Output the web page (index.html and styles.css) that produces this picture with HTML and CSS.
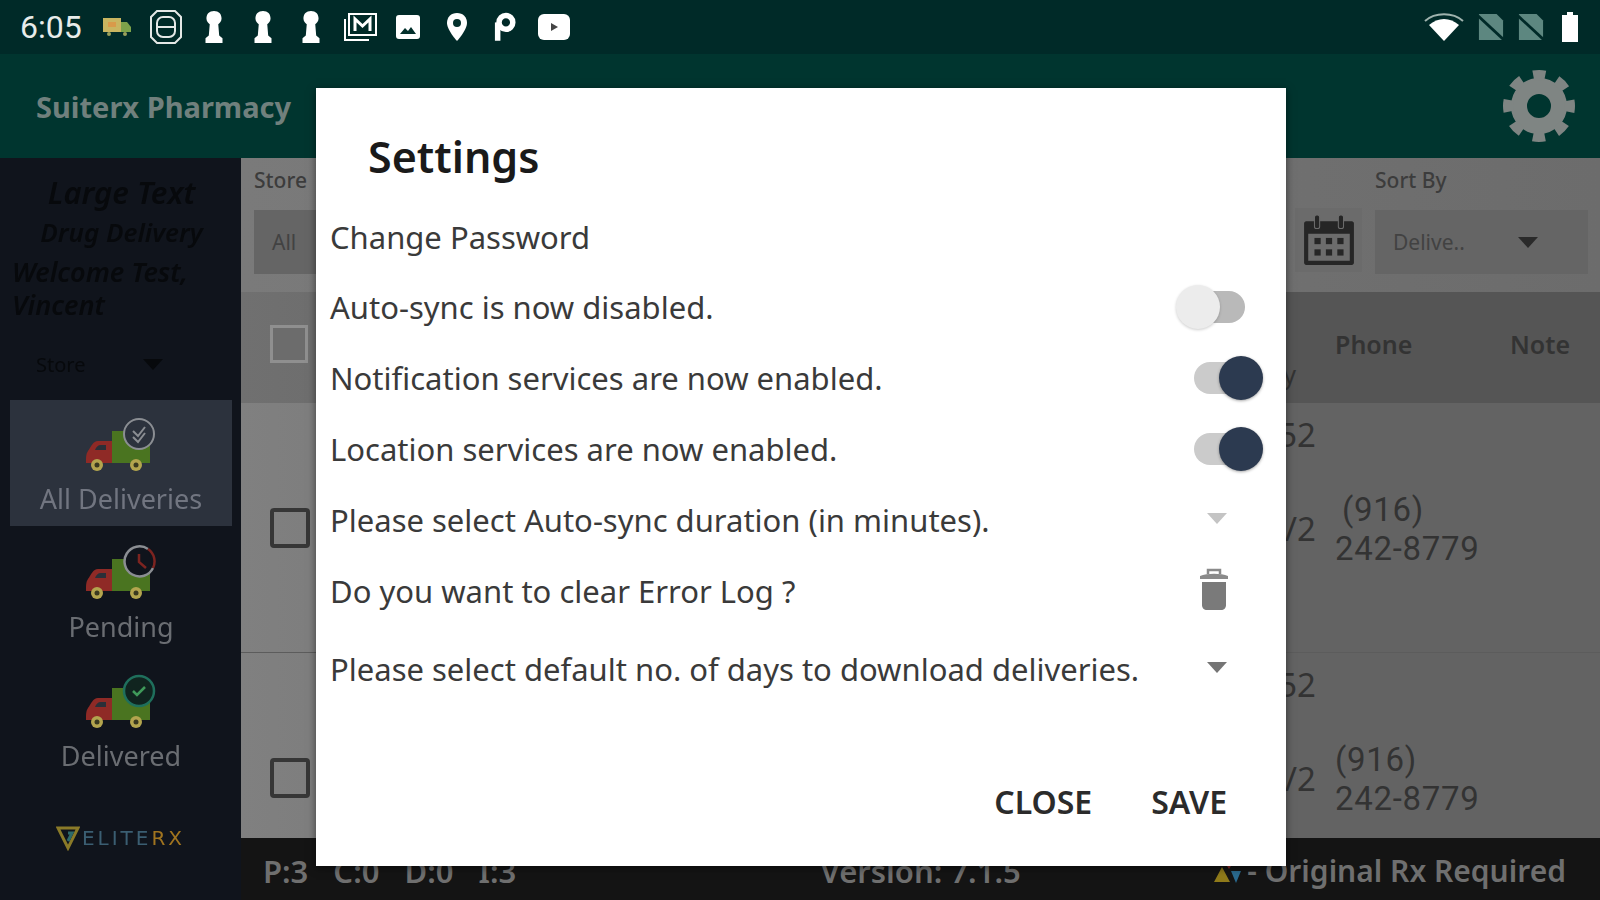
FILE: index.html
```html
<!DOCTYPE html>
<html lang="en">
<head>
  <meta charset="UTF-8">
  <title>Suiterx Pharmacy</title>
  <link rel="stylesheet" href="styles.css">
</head>
<body>

<svg class="defs" width="0" height="0">
  <symbol id="truck" viewBox="0 0 72 56">
    <path d="M28 24 H14 C9 24 7 30 4 34 C2 37 2 40 2 46 H28 Z" fill="#8f2a26"/>
    <path d="M11 33 C12 30 14 28 17 28 H22 V33 Z" fill="#2b2f38"/>
    <path d="M28 14 H66 V46 H28 Z" fill="#4a7420"/>
    <circle cx="13" cy="48" r="6" fill="#b3a54e"/>
    <circle cx="13" cy="48" r="2.5" fill="#3a3a20"/>
    <circle cx="52" cy="48" r="6" fill="#b3a54e"/>
    <circle cx="52" cy="48" r="2.5" fill="#3a3a20"/>
  </symbol>
  <symbol id="pawn" viewBox="0 0 24 36">
    <path d="M12 1 C7 1 4 4 4 9 C4 12 6 14 7.5 15 L6.5 27 L3 30 V35 H21 V30 L17.5 27 L16.5 15 C18 14 20 12 20 9 C20 4 17 1 12 1 Z" fill="#fff"/>
  </symbol>
  <symbol id="sim" viewBox="0 0 28 30">
    <path d="M1 1 H20 L27 8 V29 H1 Z" fill="#5d8780"/>
    <path d="M0 3 L28 29" stroke="#002a28" stroke-width="3"/>
  </symbol>
</svg>

<div class="statusbar">
  <span class="clock">6:05</span>
  <div class="status-icons">
    <svg width="30" height="22" viewBox="0 0 30 22">
      <rect x="1" y="2" width="18" height="14" fill="#c9b560"/>
      <rect x="6" y="6" width="8" height="5" fill="#d99a4a"/>
      <path d="M19 6 H25 L29 11 V16 H19 Z" fill="#7da24a"/>
      <circle cx="7" cy="18" r="2" fill="#9aa05a"/>
      <circle cx="23" cy="18" r="2" fill="#9aa05a"/>
    </svg>
    <svg width="34" height="36" viewBox="0 0 34 36" fill="none" stroke="#e4e8e6" stroke-width="2">
      <path d="M8 2 H26 L32 8 V28 L26 34 H8 L2 28 V8 Z"/>
      <rect x="8" y="8" width="18" height="20" rx="6"/>
      <path d="M8 18 H26"/>
    </svg>
    <svg width="24" height="34"><use href="#pawn"/></svg>
    <svg width="24" height="34"><use href="#pawn"/></svg>
    <svg width="24" height="34"><use href="#pawn"/></svg>
    <svg width="34" height="30" viewBox="0 0 34 30" fill="none" stroke="#fff">
      <path d="M2 7 V28 H26" stroke-width="2"/>
      <rect x="6" y="2" width="27" height="21" stroke-width="2"/>
      <path d="M12 19 V7 L19.500 14 L27 7 V19" stroke-width="3"/>
    </svg>
    <svg width="24" height="26" viewBox="0 0 24 26">
      <rect x="0" y="1" width="24" height="24" rx="3" fill="#fff"/>
      <path d="M4 20 L9 14 L12 17 L15 13 L20 20 Z" fill="#03302c"/>
    </svg>
    <svg width="22" height="30" viewBox="0 0 22 30">
      <path d="M11 1 C5 1 1 5 1 11 C1 18 11 29 11 29 C11 29 21 18 21 11 C21 5 17 1 11 1 Z" fill="#fff"/>
      <circle cx="11" cy="11" r="4" fill="#03302c"/>
    </svg>
    <svg width="22" height="30" viewBox="0 0 24 32" fill="none" stroke="#fff" stroke-width="6">
      <path d="M4 31 V11"/>
      <circle cx="13" cy="11" r="7.500"/>
    </svg>
    <svg width="32" height="26" viewBox="0 0 32 26">
      <rect x="0" y="0" width="32" height="26" rx="6" fill="#fff"/>
      <path d="M13 9 L20 13 L13 17 Z" fill="#444"/>
    </svg>
  </div>

  <div class="status-right">
    <svg width="40" height="30" viewBox="0 0 40 30">
      <path d="M1 9 C11 0 29 0 39 9" fill="none" stroke="#9fb3ae" stroke-width="2"/>
      <path d="M5 13 C14 5 26 5 35 13 L20 29 Z" fill="#fff"/>
    </svg>
    <svg width="26" height="28"><use href="#sim"/></svg>
    <svg width="26" height="28"><use href="#sim"/></svg>
    <svg class="battery" width="20" height="32" viewBox="0 0 20 32">
      <path d="M7 1 H13 V4 H18 V31 H2 V4 H7 Z" fill="#fff"/>
    </svg>
  </div>
</div>

<div class="appbar">
  <span class="app-title">Suiterx Pharmacy</span>
  <svg class="gear" width="72" height="72" viewBox="0 0 72 72" fill="none" stroke="#7f8583">
    <circle cx="36" cy="36" r="20" stroke-width="16"/>
    <circle cx="36" cy="36" r="31" stroke-width="10" stroke-dasharray="12 12.350" stroke-dashoffset="6"/>
  </svg>
</div>

<div class="main">
  <aside class="sidebar">
    <div class="welcome">
      <div class="brand-big">Large Text</div>
      <div class="brand-small">Drug Delivery</div>
      <div class="user">Welcome Test, Vincent</div>
    </div>
    <div class="store-pick">
      <span>Store</span>
      <i class="arrow arrow-dark"></i>
    </div>

    <nav class="nav">
      <div class="nav-item active">
        <div class="truck">
          <svg width="72" height="56"><use href="#truck"/></svg>
          <svg class="badge" width="34" height="34" viewBox="0 0 34 34" fill="#2c323d" stroke="#8b8e93" stroke-width="2">
            <circle cx="17" cy="17" r="15"/>
            <path d="M11 14 L16 19 L23 10 M11 20 L16 25 L23 16" fill="none"/>
          </svg>
        </div>
        <span>All Deliveries</span>
      </div>
      <div class="nav-item">
        <div class="truck">
          <svg width="72" height="56"><use href="#truck"/></svg>
          <svg class="badge" width="34" height="34" viewBox="0 0 34 34" fill="none" stroke-width="2.500">
            <path d="M26 4 A15 15 0 1 0 31 23" stroke="#8b8e93" fill="#10141c"/>
            <path d="M31 23 A15 15 0 0 0 26 4" stroke="#7d2420"/>
            <path d="M17 9 V17 L24 23" stroke="#7d2420"/>
          </svg>
        </div>
        <span>Pending</span>
      </div>
      <div class="nav-item">
        <div class="truck">
          <svg width="72" height="56"><use href="#truck"/></svg>
          <svg class="badge" width="34" height="34" viewBox="0 0 34 34" fill="#10241f" stroke="#1f6f5c" stroke-width="2.500">
            <circle cx="17" cy="17" r="15"/>
            <path d="M11 17 L15 21 L23 13" fill="none" stroke="#3f9a5a"/>
          </svg>
        </div>
        <span>Delivered</span>
      </div>
    </nav>

    <div class="logo">
      <svg width="24" height="26" viewBox="0 0 24 26" fill="none" stroke-width="3">
        <path d="M2 3 H22 L12 23 Z" stroke="#8a7a28"/>
        <path d="M12 8 L16 8 L12 16" stroke="#2d6a6a"/>
      </svg>
      <span class="logo-elite">ELITE</span><span class="logo-rx">RX</span>
    </div>
  </aside>

  <section class="content">
    <div class="toolbar">
      <div class="field store-field">
        <label>Store</label>
        <div class="select-box">All</div>
      </div>
      <div class="cal-btn">
        <svg width="54" height="54" viewBox="0 0 52 52">
          <path d="M4 8 H48 C49 8 50 9 50 10 V48 C50 49 49 50 48 50 H4 C3 50 2 49 2 48 V10 C2 9 3 8 4 8 Z" fill="#262626"/>
          <rect x="6" y="20" width="40" height="26" fill="#6c6c6c"/>
          <rect x="12" y="2" width="5" height="13" rx="2" fill="#262626" stroke="#6c6c6c"/>
          <rect x="35" y="2" width="5" height="13" rx="2" fill="#262626" stroke="#6c6c6c"/>
          <g fill="#262626">
            <rect x="12" y="24" width="6" height="6"/><rect x="23" y="24" width="6" height="6"/><rect x="34" y="24" width="6" height="6"/>
            <rect x="12" y="35" width="6" height="6"/><rect x="23" y="35" width="6" height="6"/><rect x="34" y="35" width="6" height="6"/>
          </g>
        </svg>
      </div>
      <div class="field sort-field">
        <label>Sort By</label>
        <div class="select-box">Delive..<i class="arrow arrow-dark"></i></div>
      </div>
    </div>

    <div class="table">
      <div class="t-row t-head">
        <div class="cell-check"><span class="check check-head"></span></div>
        <div></div>
        <div class="cell-date"><span class="date-tail">y</span></div>
        <div class="cell-phone">Phone</div>
        <div class="cell-note">Note</div>
      </div>
      <div class="t-row t-item">
        <div class="cell-check"><span class="check"></span></div>
        <div></div>
        <div class="cell-date"><span>52</span><span>/2</span></div>
        <div class="cell-phone phone-first">(916)<br><span class="phone-num">242-8779</span></div>
        <div></div>
      </div>
      <div class="t-row t-item">
        <div class="cell-check"><span class="check"></span></div>
        <div></div>
        <div class="cell-date"><span>52</span><span>/2</span></div>
        <div class="cell-phone">(916)<br>242-8779</div>
        <div></div>
      </div>
    </div>

    <div class="footer">
      <div class="counts"><span>P:3</span><span>C:0</span><span>D:0</span><span>I:3</span></div>
      <div class="version">Version: 7.1.5</div>
      <div class="legend">
        <svg width="32" height="24" viewBox="0 0 32 24">
          <path d="M1 23 L9 8 L17 23 Z" fill="#8f7a1a"/>
          <path d="M18 12 L28 12 L23 24 Z" fill="#2a6a8f"/>
          <path d="M12 4 L20 4 L16 10 Z" fill="#8f2a26"/>
        </svg>
        <span>- Original Rx Required</span>
      </div>
    </div>
  </section>
</div>

<div class="dialog">
  <h2>Settings</h2>
  <div class="set-row row-short">Change Password</div>
  <div class="set-row">Auto-sync is now disabled.
    <div class="ctl"><span class="toggle"></span></div>
  </div>
  <div class="set-row">Notification services are now enabled.
    <div class="ctl"><span class="toggle on"></span></div>
  </div>
  <div class="set-row">Location services are now enabled.
    <div class="ctl"><span class="toggle on"></span></div>
  </div>
  <div class="set-row">Please select Auto-sync duration (in minutes).
    <div class="ctl"><i class="arrow arrow-light"></i></div>
  </div>
  <div class="set-row">Do you want to clear Error Log ?
    <div class="ctl">
      <svg class="trash" width="30" height="42" viewBox="0 0 30 42">
        <path d="M9 6 V2 H21 V6" fill="none" stroke="#8a8a8a" stroke-width="2.500"/>
        <path d="M1 8 C8 5 22 5 29 8 V11 H1 Z" fill="#8a8a8a"/>
        <path d="M3 14 H27 V37 C27 40 25 42 22 42 H8 C5 42 3 40 3 37 Z" fill="#7a7a7a"/>
      </svg>
    </div>
  </div>
  <div class="set-row row-tall">Please select default no. of days to download deliveries.
    <div class="ctl"><i class="arrow arrow-mid"></i></div>
  </div>
  <div class="actions">
    <button>CLOSE</button>
    <button>SAVE</button>
  </div>
</div>

</body>
</html>
```

FILE: styles.css
```css
html, body {
  margin: 0;
  height: 100%;
}

body {
  width: 1600px;
  height: 900px;
  overflow: hidden;
  position: relative;
  font-family: "Noto Sans", "Open Sans", sans-serif;
  background: #10141c;
  filter: blur(0.6px);
}

.defs {
  position: absolute;
}

/* status bar */
.statusbar {
  height: 54px;
  background: #002a28;
  display: flex;
  align-items: center;
  padding: 0 20px;
  box-sizing: border-box;
}

.clock {
  font-family: Roboto, sans-serif;
  font-size: 32px;
  color: #e8ecea;
  width: 73px;
}

.status-icons {
  display: grid;
  grid-auto-flow: column;
  grid-auto-columns: 48.500px;
  justify-items: center;
  align-items: center;
}

.status-right {
  margin-left: auto;
  display: flex;
  align-items: center;
  gap: 14px;
}

.battery {
  margin-left: 2px;
}

/* app bar */
.appbar {
  height: 104px;
  background: #00352f;
  display: flex;
  align-items: center;
  justify-content: space-between;
  padding: 0 25px 0 36px;
}

.app-title {
  font-size: 29px;
  font-weight: 700;
  color: #70807d;
}

.gear {
  flex: none;
}

/* main */
.main {
  height: 742px;
  display: grid;
  grid-template-columns: 241px 1fr;
}

.sidebar {
  background: #10141c;
  color: #6a6d72;
  display: flex;
  flex-direction: column;
  overflow: hidden;
}

.welcome {
  height: 178px;
  padding: 14px 0 0 12px;
  box-sizing: border-box;
  color: #07090c;
  font-style: italic;
  font-weight: 600;
}

.brand-big {
  font-size: 31px;
  line-height: 40px;
  text-align: center;
  padding-right: 10px;
}

.brand-small {
  font-size: 26px;
  line-height: 40px;
  text-align: center;
  padding-right: 10px;
}

.user {
  font-size: 27px;
  line-height: 33px;
  width: 215px;
  margin-top: 3px;
}

.store-pick {
  height: 64px;
  margin-top: -4px;
  display: flex;
  align-items: center;
  padding-left: 36px;
  gap: 58px;
  font-size: 20px;
  color: #07090c;
}

.nav {
  display: flex;
  flex-direction: column;
  margin-top: 4px;
}

.nav-item {
  height: 129px;
  margin: 0 9px 0 10px;
  display: flex;
  flex-direction: column;
  align-items: center;
  font-size: 27px;
  color: #6a6d72;
  padding-top: 16px;
  box-sizing: border-box;
}

.nav-item.active {
  height: 126px;
  background: #2c323d;
  margin-bottom: 3px;
  padding-top: 17px;
  color: #717580;
}

.truck {
  position: relative;
  width: 72px;
  height: 56px;
  margin-left: -2px;
  margin-bottom: 7px;
}

.badge {
  position: absolute;
  right: 0;
  top: 0;
}

.logo {
  display: flex;
  align-items: center;
  justify-content: center;
  margin-top: 38px;
  font-family: "DejaVu Sans", sans-serif;
  font-size: 20px;
  letter-spacing: 3px;
}

.logo-elite {
  color: #3b5e72;
  margin-left: 2px;
}

.logo-rx {
  color: #a0741f;
}

/* content */
.content {
  display: flex;
  flex-direction: column;
  min-height: 0;
  background: #6e6e6e;
}

.toolbar {
  height: 134px;
  flex: none;
  display: flex;
  align-items: flex-start;
  padding: 0 12px 0 13px;
  box-sizing: border-box;
  background: linear-gradient(90deg, #7a7a7a, #6c6c6c);
}

.field label {
  display: block;
  font-size: 21px;
  line-height: 28px;
  margin: 8px 0 16px;
  color: #3c3c3c;
  font-weight: 500;
}

.select-box {
  height: 64px;
  background: #656565;
  display: flex;
  align-items: center;
  justify-content: space-between;
  padding: 0 50px 0 18px;
  font-size: 21px;
  color: #424242;
}

.store-field {
  width: 200px;
}

.cal-btn {
  margin: 50px 13px 0 auto;
  width: 67px;
  height: 64px;
  background: #6b6b6b;
  display: flex;
  align-items: center;
  justify-content: center;
}

.sort-field {
  width: 213px;
}

.arrow {
  display: block;
  width: 0;
  height: 0;
  border-left: 10px solid transparent;
  border-right: 10px solid transparent;
}

.arrow-dark {
  border-top: 11px solid #2a2a2a;
}

.store-pick .arrow-dark {
  border-top-color: #07090c;
}

.arrow-light {
  border-top: 11px solid #c4c4c4;
  margin: -2px 6px 0 0;
}

.arrow-mid {
  border-top: 11px solid #757575;
  margin: -3px 6px 0 0;
}

.table {
  flex: 1;
  min-height: 0;
  overflow: hidden;
  background: linear-gradient(90deg, #808080, #636363 70%);
}

.t-row {
  display: grid;
  grid-template-columns: 94px 1fr 100px 175px 90px;
}

.t-head {
  height: 111px;
  box-sizing: border-box;
  padding-bottom: 7px;
  align-items: center;
  background: linear-gradient(90deg, #707070, #555 70%);
  font-size: 25px;
  font-weight: 600;
  color: #333;
}

.t-item {
  height: 250px;
  box-sizing: border-box;
  border-bottom: 1px solid #5c5c5c;
  font-size: 33px;
  line-height: 38px;
  color: #333;
  align-items: center;
}

.t-item .cell-phone {
  font-family: Roboto, sans-serif;
  line-height: 39px;
  letter-spacing: 0.7px;
  padding-top: 3px;
}

.cell-check {
  padding-left: 29px;
}

.check {
  display: block;
  width: 32px;
  height: 32px;
  border: 4px solid #363636;
  border-radius: 4px;
}

.check-head {
  border: 3px solid #8f8f8f;
  background: #6c6c6c;
  border-radius: 0;
}

.cell-date {
  align-self: stretch;
  display: flex;
  flex-direction: column;
  align-items: flex-end;
  padding: 13px 19px 0 0;
  gap: 56px;
}

.date-tail {
  margin-top: 52px;
  margin-right: 20px;
  font-weight: 400;
}

.phone-first {
  text-indent: 7px;
}

.phone-num {
  display: inline-block;
  text-indent: 0;
}

/* footer */
.footer {
  height: 62px;
  flex: none;
  box-sizing: border-box;
  background: #141414;
  color: #6f6f6f;
  font-size: 31px;
  font-weight: 600;
  display: grid;
  grid-template-columns: 1fr 1fr 1fr;
  align-items: center;
  padding: 3px 34px 0 22px;
}

.counts {
  display: flex;
  gap: 25px;
}

.version {
  text-align: center;
  margin-left: 12px;
}

.legend {
  display: flex;
  align-items: center;
  justify-content: flex-end;
  gap: 2px;
  font-size: 30px;
  white-space: nowrap;
}

/* dialog */
.dialog {
  position: absolute;
  left: 316px;
  top: 88px;
  width: 970px;
  height: 778px;
  background: #fff;
  box-shadow: 0 2px 8px rgba(0,0,0,0.5);
  display: flex;
  flex-direction: column;
  color: #3a3a3a;
  z-index: 2;
}

.dialog h2 {
  margin: 0;
  height: 115px;
  padding: 39px 0 0 52px;
  box-sizing: border-box;
  font-size: 43px;
  line-height: 60px;
  font-weight: 600;
  color: #1a1a1a;
}

.set-row {
  height: 71px;
  flex: none;
  box-sizing: border-box;
  display: flex;
  align-items: center;
  justify-content: space-between;
  padding: 0 41px 2px 14px;
  font-size: 31px;
}

.row-short {
  height: 69px;
}

.row-tall {
  height: 86px;
}

.ctl {
  width: 51px;
  display: flex;
  justify-content: center;
}

.toggle {
  position: relative;
  display: block;
  width: 51px;
  height: 32px;
  border-radius: 16px;
  background: #b9b9b9;
}

.toggle::after {
  content: "";
  position: absolute;
  top: -6px;
  left: -18px;
  width: 44px;
  height: 44px;
  border-radius: 50%;
  background: #ececec;
  box-shadow: 0 1px 3px rgba(0,0,0,0.2);
}

.toggle.on {
  background: #cbcbcb;
}

.toggle.on::after {
  left: auto;
  right: -18px;
  background: #2c3a50;
  box-shadow: 0 1px 3px rgba(0,0,0,0.35);
}

.trash {
  margin: 0 12px 4px 0;
}

.actions {
  margin-top: auto;
  display: flex;
  justify-content: flex-end;
  gap: 59px;
  padding: 0 59px 43px 0;
}

.actions button {
  border: none;
  background: none;
  padding: 0;
  font-family: inherit;
  font-size: 32px;
  font-weight: 600;
  color: #2b2b2b;
}
```
